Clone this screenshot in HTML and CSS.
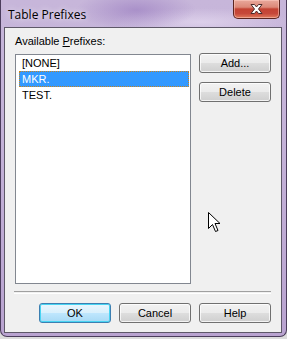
FILE: index.html
```html
<!DOCTYPE html>
<html>
<head>
<meta charset="utf-8">
<link rel="stylesheet" href="styles.css">
</head>
<body>
<div class="window">
  <div class="titlebar">
    <span class="title">Table Prefixes</span>
    <div class="close">
      <svg width="17" height="12" viewBox="0 0 17 12">
        <path d="M3 1.5 H6.5 L8.5 4 L10.5 1.5 H14 L10.5 6 L14 10.5 H10.5 L8.5 8 L6.5 10.5 H3 L6.5 6 Z" fill="#fff" stroke="#4a2a2a" stroke-width="1" stroke-linejoin="round"/>
      </svg>
    </div>
  </div>
  <div class="client">
    <div class="label">Available <u>P</u>refixes:</div>
    <div class="row">
      <div class="listbox">
        <div class="item">[NONE]</div>
        <div class="item selected">MKR.</div>
        <div class="item">TEST.</div>
      </div>
      <div class="side">
        <button class="btn">Add...</button>
        <button class="btn">Delete</button>
      </div>
    </div>
    <div class="sep"></div>
    <div class="footer">
      <button class="btn default">OK</button>
      <button class="btn">Cancel</button>
      <button class="btn">Help</button>
    </div>
  </div>
</div>
<svg class="cursor" width="13" height="21" viewBox="0 0 13 21">
  <path d="M0.5 0.5 V16.5 L4.5 12.5 L7.5 19.5 L10 18.5 L7 11.5 H12 Z" fill="#fff" stroke="#000" stroke-width="1" stroke-linejoin="miter"/>
</svg>
</body>
</html>
```

FILE: styles.css
```css
html, body {
  margin: 0;
  padding: 0;
}
body {
  width: 287px;
  height: 339px;
  background: #dcdcdc;
  position: relative;
  overflow: hidden;
  font-family: "Liberation Sans", Arial, sans-serif;
  font-size: 11px;
  color: #000;
}
.window {
  box-sizing: border-box;
  width: 287px;
  height: 337px;
  background:
    radial-gradient(ellipse 60px 20px at 135px 10px, rgba(150,120,190,0.6), rgba(150,120,190,0) 100%),
    radial-gradient(ellipse 90px 14px at 200px 22px, rgba(235,225,245,0.6), rgba(235,225,245,0) 100%),
    linear-gradient(180deg, #c7b6da 0%, #c4b2d8 40%, #b9a3d0 100%);
  border: 1px solid #4b3d5c;
  border-top: none;
  border-radius: 0 0 7px 7px;
  padding: 0 4px 3px 3px;
  display: flex;
  flex-direction: column;
}
.titlebar {
  height: 29px;
  display: flex;
  justify-content: space-between;
  align-items: flex-start;
}
.title {
  font-family: "Open Sans", "Noto Sans", sans-serif;
  font-size: 12px;
  line-height: 16px;
  margin: 7px 0 0 4px;
  color: #000;
  text-shadow: 0 0 6px rgba(255,255,255,0.9);
}
.close {
  width: 47px;
  height: 19px;
  margin-right: 2px;
  box-sizing: border-box;
  border: 1px solid #5b2520;
  border-top: none;
  border-radius: 0 0 5px 5px;
  background: linear-gradient(180deg, #e9a99c 0%, #dc8878 40%, #c34232 50%, #c6483a 75%, #e07a5c 100%);
  box-shadow: inset 0 0 0 1px rgba(255,210,200,0.5);
  display: flex;
  align-items: center;
  justify-content: center;
}
.client {
  flex: 1;
  background: #f0f0f0;
  border: 1px solid #5e5868;
  padding: 7px 10px 9px 10px;
  display: flex;
  flex-direction: column;
}
.label {
  line-height: 13px;
  height: 13px;
  margin-bottom: 6px;
}
.label u {
  text-decoration: underline;
}
.row {
  display: flex;
  gap: 8px;
  align-items: flex-start;
}
.listbox {
  box-sizing: border-box;
  width: 176px;
  height: 230px;
  background: #fff;
  border: 1px solid #828790;
  padding: 0 1px 0 3px;
}
.item {
  height: 16px;
  line-height: 14px;
  padding-left: 2px;
  box-sizing: border-box;
  border: 1px solid transparent;
}
.item.selected {
  background: #3399ff;
  color: #fff;
  border: 1px dotted #c8841e;
}
.side {
  display: flex;
  flex-direction: column;
  gap: 9px;
  margin-top: -1px;
}
.btn {
  box-sizing: border-box;
  width: 72px;
  height: 20px;
  margin: 0;
  padding: 0;
  font-family: "Liberation Sans", Arial, sans-serif;
  font-size: 11px;
  color: #000;
  border: 1px solid #707070;
  border-radius: 3px;
  background: linear-gradient(180deg, #f2f2f2 0%, #ebebeb 48%, #dddddd 52%, #cfcfcf 100%);
  box-shadow: inset 0 0 0 1px rgba(255,255,255,0.75);
}
.btn.default {
  border-color: #3c7fb1;
  background: linear-gradient(180deg, #eaf6fd 0%, #d9f0fc 48%, #bee6fd 52%, #a7d9f5 100%);
  box-shadow: inset 0 0 0 1px #48d4f2;
}
.sep {
  margin: 7px 0 9px -1px;
  height: 1px;
  border-top: 1px solid #a0a0a0;
  border-bottom: 1px solid #ffffff;
  width: 257px;
}
.footer {
  display: flex;
  justify-content: flex-end;
  gap: 8px;
}
.cursor {
  position: absolute;
  left: 208px;
  top: 212px;
}
```
